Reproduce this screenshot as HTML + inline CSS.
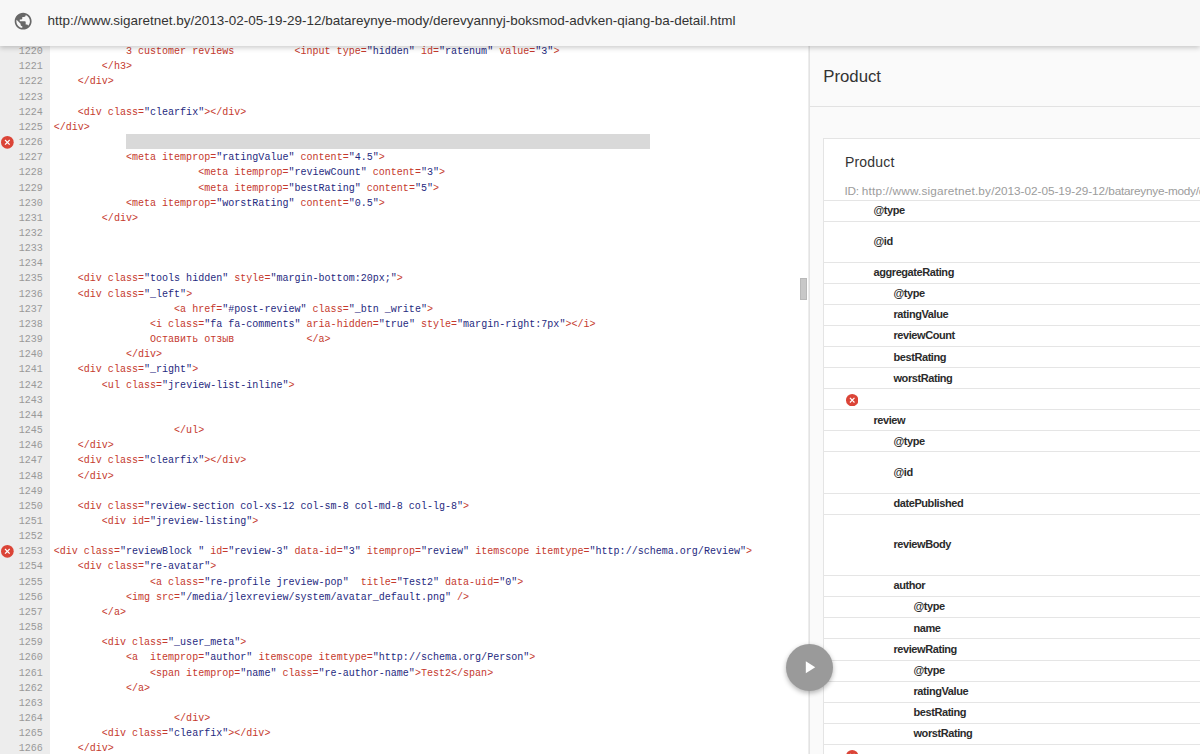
<!DOCTYPE html>
<html lang="en">
<head>
<meta charset="utf-8">
<title>Structured Data Testing Tool</title>
<style>
html,body{margin:0;padding:0}
body{width:1200px;height:754px;overflow:hidden;background:#fff;position:relative;font-family:"Liberation Sans",sans-serif}
#bar{position:absolute;left:0;top:0;width:1200px;height:46px;background:#f7f7f7;box-shadow:0 2px 5px rgba(0,0,0,.2);z-index:5}
#globe{position:absolute;left:13.45px;top:10.85px;width:20.3px;height:20.3px}
#url{position:absolute;left:47.5px;top:0;height:42px;line-height:42px;font-size:13.47px;color:#333;white-space:nowrap}
#code{position:absolute;left:0;top:0;width:808px;height:754px;background:#fff;overflow:hidden}
#gutter{position:absolute;left:0;top:0;width:50px;height:754px;background:#ededed;box-sizing:border-box;padding-top:44.15px;font-family:"Liberation Mono",monospace;font-size:10.04px;color:#999;text-align:right;padding-right:7.1px}
#gutter div{height:15.163px;line-height:15.163px}
#src{position:absolute;left:53.7px;top:44.15px;margin:0;font-family:"Liberation Mono",monospace;font-size:10.04px;color:#c5392d;}
#src div{height:15.163px;line-height:15.163px;white-space:pre}
#src b{font-weight:normal;color:#1f2a80}
#sel{position:absolute;left:125.6px;top:134.2px;width:524.1px;height:14.5px;background:#d9d9d9}
.err{position:absolute;width:12.4px;height:12.4px}
.e1{left:1.05px;top:136.15px;width:12.7px;height:12.7px}
.e2{left:1.05px;top:545.3px;width:12.7px;height:12.7px}
#thumb{position:absolute;left:800px;top:277.5px;width:7px;height:22px;background:#c8c8c8;border:1px solid #b9b9b9;box-sizing:border-box}
#panel{position:absolute;left:809.4px;top:0;width:390.6px;height:754px;background:#fafafa;overflow:hidden}
#vdiv{position:absolute;left:808px;top:0;width:2px;height:754px;background:linear-gradient(to right,#ededed 50%,#e3e3e3 50%)}
#ptitle{position:absolute;left:13.8px;top:57.3px;height:40px;line-height:40px;font-size:16.8px;color:#333}
#pline{position:absolute;left:0;top:106px;width:392px;height:1px;background:#e2e2e2}
#card{position:absolute;left:13.7px;top:138px;width:400px;height:640px;background:#fff;border:1px solid #e4e4e4;box-sizing:border-box}
#ctitle{position:absolute;left:20.8px;top:13px;height:20px;line-height:20px;font-size:14px;letter-spacing:.2px;color:#333}
#cid{position:absolute;left:20.5px;top:42.6px;height:18px;line-height:18px;font-size:11.8px;color:#9c9c9c;white-space:nowrap}
#rows{position:absolute;left:13.7px;top:0;width:400px;height:754px}
#fab{position:absolute;left:785.8px;top:643.6px;width:47px;height:47px;border-radius:50%;background:#9a9a9a;box-shadow:0 2px 5px rgba(0,0,0,.3);z-index:4}
#fab svg{position:absolute;left:13.3px;top:13.5px;width:20.5px;height:20.5px}
.c1{letter-spacing:-.28px}
.c2{letter-spacing:.17px}
.c3{letter-spacing:-.05px}
.c4{letter-spacing:-.25px}
.ln{position:absolute;left:0;width:400px;height:1px;background:#e5e5e5}
.lb{position:absolute;font-size:11px;line-height:12px;font-weight:bold;color:#2b2b2b;letter-spacing:-.42px;white-space:nowrap}
.l1{left:50.4px}
.l2{left:70.4px}
.l3{left:90.4px}
#rows .err{left:23px}

</style>
</head>
<body>
<div id="code">
<div id="gutter">
<div>1220</div>
<div>1221</div>
<div>1222</div>
<div>1223</div>
<div>1224</div>
<div>1225</div>
<div>1226</div>
<div>1227</div>
<div>1228</div>
<div>1229</div>
<div>1230</div>
<div>1231</div>
<div>1232</div>
<div>1233</div>
<div>1234</div>
<div>1235</div>
<div>1236</div>
<div>1237</div>
<div>1238</div>
<div>1239</div>
<div>1240</div>
<div>1241</div>
<div>1242</div>
<div>1243</div>
<div>1244</div>
<div>1245</div>
<div>1246</div>
<div>1247</div>
<div>1248</div>
<div>1249</div>
<div>1250</div>
<div>1251</div>
<div>1252</div>
<div>1253</div>
<div>1254</div>
<div>1255</div>
<div>1256</div>
<div>1257</div>
<div>1258</div>
<div>1259</div>
<div>1260</div>
<div>1261</div>
<div>1262</div>
<div>1263</div>
<div>1264</div>
<div>1265</div>
<div>1266</div>
</div>
<div id="sel"></div>
<div id="src">
<div>            3 customer reviews          &lt;input type=<b>"hidden"</b> id=<b>"ratenum"</b> value=<b>"3"</b>&gt;</div>
<div>        &lt;/h3&gt;</div>
<div>    &lt;/div&gt;</div>
<div> </div>
<div>    &lt;div class=<b>"clearfix"</b>&gt;&lt;/div&gt;</div>
<div>&lt;/div&gt;</div>
<div> </div>
<div>            &lt;meta itemprop=<b>"ratingValue"</b> content=<b>"4.5"</b>&gt;</div>
<div>                        &lt;meta itemprop=<b>"reviewCount"</b> content=<b>"3"</b>&gt;</div>
<div>                        &lt;meta itemprop=<b>"bestRating"</b> content=<b>"5"</b>&gt;</div>
<div>            &lt;meta itemprop=<b>"worstRating"</b> content=<b>"0.5"</b>&gt;</div>
<div>        &lt;/div&gt;</div>
<div> </div>
<div> </div>
<div> </div>
<div>    &lt;div class=<b>"tools hidden"</b> style=<b>"margin-bottom:20px;"</b>&gt;</div>
<div>    &lt;div class=<b>"_left"</b>&gt;</div>
<div>                    &lt;a href=<b>"#post-review"</b> class=<b>"_btn _write"</b>&gt;</div>
<div>                &lt;i class=<b>"fa fa-comments"</b> aria-hidden=<b>"true"</b> style=<b>"margin-right:7px"</b>&gt;&lt;/i&gt;</div>
<div>                Оставить отзыв            &lt;/a&gt;</div>
<div>            &lt;/div&gt;</div>
<div>    &lt;div class=<b>"_right"</b>&gt;</div>
<div>        &lt;ul class=<b>"jreview-list-inline"</b>&gt;</div>
<div> </div>
<div> </div>
<div>                    &lt;/ul&gt;</div>
<div>    &lt;/div&gt;</div>
<div>    &lt;div class=<b>"clearfix"</b>&gt;&lt;/div&gt;</div>
<div>    &lt;/div&gt;</div>
<div> </div>
<div>    &lt;div class=<b>"review-section col-xs-12 col-sm-8 col-md-8 col-lg-8"</b>&gt;</div>
<div>        &lt;div id=<b>"jreview-listing"</b>&gt;</div>
<div> </div>
<div>&lt;div class=<b>"reviewBlock "</b> id=<b>"review-3"</b> data-id=<b>"3"</b> itemprop=<b>"review"</b> itemscope itemtype=<b>"http://schema.org/Review"</b>&gt;</div>
<div>    &lt;div class=<b>"re-avatar"</b>&gt;</div>
<div>                &lt;a class=<b>"re-profile jreview-pop"</b>  title=<b>"Test2"</b> data-uid=<b>"0"</b>&gt;</div>
<div>            &lt;img src=<b>"/media/jlexreview/system/avatar_default.png"</b> /&gt;</div>
<div>        &lt;/a&gt;</div>
<div> </div>
<div>        &lt;div class=<b>"_user_meta"</b>&gt;</div>
<div>            &lt;a  itemprop=<b>"author"</b> itemscope itemtype=<b>"http://schema.org/Person"</b>&gt;</div>
<div>                &lt;span itemprop=<b>"name"</b> class=<b>"re-author-name"</b>&gt;Test2&lt;/span&gt;</div>
<div>            &lt;/a&gt;</div>
<div> </div>
<div>                    &lt;/div&gt;</div>
<div>        &lt;div class=<b>"clearfix"</b>&gt;&lt;/div&gt;</div>
<div>    &lt;/div&gt;</div>
</div>
<svg class="err e1" viewBox="0 0 24 24"><circle cx="12" cy="12" r="12" fill="#db4437"/><path fill="#fff" d="M17.2 15.600L15.600 17.2 12 13.600 8.400 17.2 6.800 15.600 10.400 12 6.800 8.400 8.400 6.800 12 10.400 15.600 6.800 17.2 8.400 13.600 12z"/></svg>
<svg class="err e2" viewBox="0 0 24 24"><circle cx="12" cy="12" r="12" fill="#db4437"/><path fill="#fff" d="M17.2 15.600L15.600 17.2 12 13.600 8.400 17.2 6.800 15.600 10.400 12 6.800 8.400 8.400 6.800 12 10.400 15.600 6.800 17.2 8.400 13.600 12z"/></svg>
<div id="thumb"></div>
</div>
<div id="panel">
<div id="ptitle">Product</div>
<div id="pline"></div>
<div id="card">
<div id="ctitle">Product</div>
<div id="cid"><span class="c1">ID: </span><span class="c2">http://www.sigaretnet.by/</span><span class="c3">2013-02-05-19-29-12/</span><span class="c4">batareynye-mody/derevyannyj-boksmod-advken-qiang-ba-detail.html</span></div>
</div>
<div id="rows">
<i class="ln" style="top:200px"></i>
<i class="ln" style="top:221px"></i>
<i class="ln" style="top:262px"></i>
<i class="ln" style="top:283px"></i>
<i class="ln" style="top:304px"></i>
<i class="ln" style="top:325px"></i>
<i class="ln" style="top:346px"></i>
<i class="ln" style="top:367px"></i>
<i class="ln" style="top:388px"></i>
<i class="ln" style="top:409px"></i>
<i class="ln" style="top:430px"></i>
<i class="ln" style="top:451px"></i>
<i class="ln" style="top:493px"></i>
<i class="ln" style="top:514px"></i>
<i class="ln" style="top:575px"></i>
<i class="ln" style="top:596px"></i>
<i class="ln" style="top:617px"></i>
<i class="ln" style="top:638px"></i>
<i class="ln" style="top:660px"></i>
<i class="ln" style="top:681px"></i>
<i class="ln" style="top:702px"></i>
<i class="ln" style="top:723px"></i>
<i class="ln" style="top:744px"></i>
<span class="lb l1" style="top:204px">@type</span>
<span class="lb l1" style="top:235px">@id</span>
<span class="lb l1" style="top:266px">aggregateRating</span>
<span class="lb l2" style="top:287px">@type</span>
<span class="lb l2" style="top:308px">ratingValue</span>
<span class="lb l2" style="top:329px">reviewCount</span>
<span class="lb l2" style="top:351px">bestRating</span>
<span class="lb l2" style="top:372px">worstRating</span>
<span class="lb l1" style="top:414px">review</span>
<span class="lb l2" style="top:435px">@type</span>
<span class="lb l2" style="top:466px">@id</span>
<span class="lb l2" style="top:497px">datePublished</span>
<span class="lb l2" style="top:538px">reviewBody</span>
<span class="lb l2" style="top:579px">author</span>
<span class="lb l3" style="top:600px">@type</span>
<span class="lb l3" style="top:622px">name</span>
<span class="lb l2" style="top:643px">reviewRating</span>
<span class="lb l3" style="top:664px">@type</span>
<span class="lb l3" style="top:685px">ratingValue</span>
<span class="lb l3" style="top:706px">bestRating</span>
<span class="lb l3" style="top:727px">worstRating</span>
<svg class="err" style="top:394px" viewBox="0 0 24 24"><circle cx="12" cy="12" r="12" fill="#db4437"/><path fill="#fff" d="M17.2 15.600L15.600 17.2 12 13.600 8.400 17.2 6.800 15.600 10.400 12 6.800 8.400 8.400 6.800 12 10.400 15.600 6.800 17.2 8.400 13.600 12z"/></svg>
<svg class="err" style="top:750px" viewBox="0 0 24 24"><circle cx="12" cy="12" r="12" fill="#db4437"/><path fill="#fff" d="M17.2 15.600L15.600 17.2 12 13.600 8.400 17.2 6.800 15.600 10.400 12 6.800 8.400 8.400 6.800 12 10.400 15.600 6.800 17.2 8.400 13.600 12z"/></svg>
</div>
</div>
<div id="vdiv"></div>
<div id="fab"><svg viewBox="0 0 24 24"><path d="M8 5v14l11-7z" fill="#fff"/></svg></div>
<div id="bar">
<svg id="globe" viewBox="0 0 24 24"><path fill="#686868" d="M12 2C6.48 2 2 6.48 2 12s4.48 10 10 10 10-4.480 10-10S17.52 2 12 2zm-1 17.930c-3.950-.49-7-3.850-7-7.930 0-.62.080-1.210.21-1.790L9 15v1c0 1.100.9 2 2 2v1.930zm6.900-2.540c-.26-.81-1-1.390-1.900-1.390h-1v-3c0-.55-.45-1-1-1H8v-2h2c.55 0 1-.45 1-1V7h2c1.100 0 2-.9 2-2v-.41c2.930 1.190 5 4.060 5 7.410 0 2.080-.8 3.970-2.100 5.390z"/></svg>
<div id="url">http://www.sigaretnet.by/2013-02-05-19-29-12/batareynye-mody/derevyannyj-boksmod-advken-qiang-ba-detail.html</div>
</div>
</body>
</html>
